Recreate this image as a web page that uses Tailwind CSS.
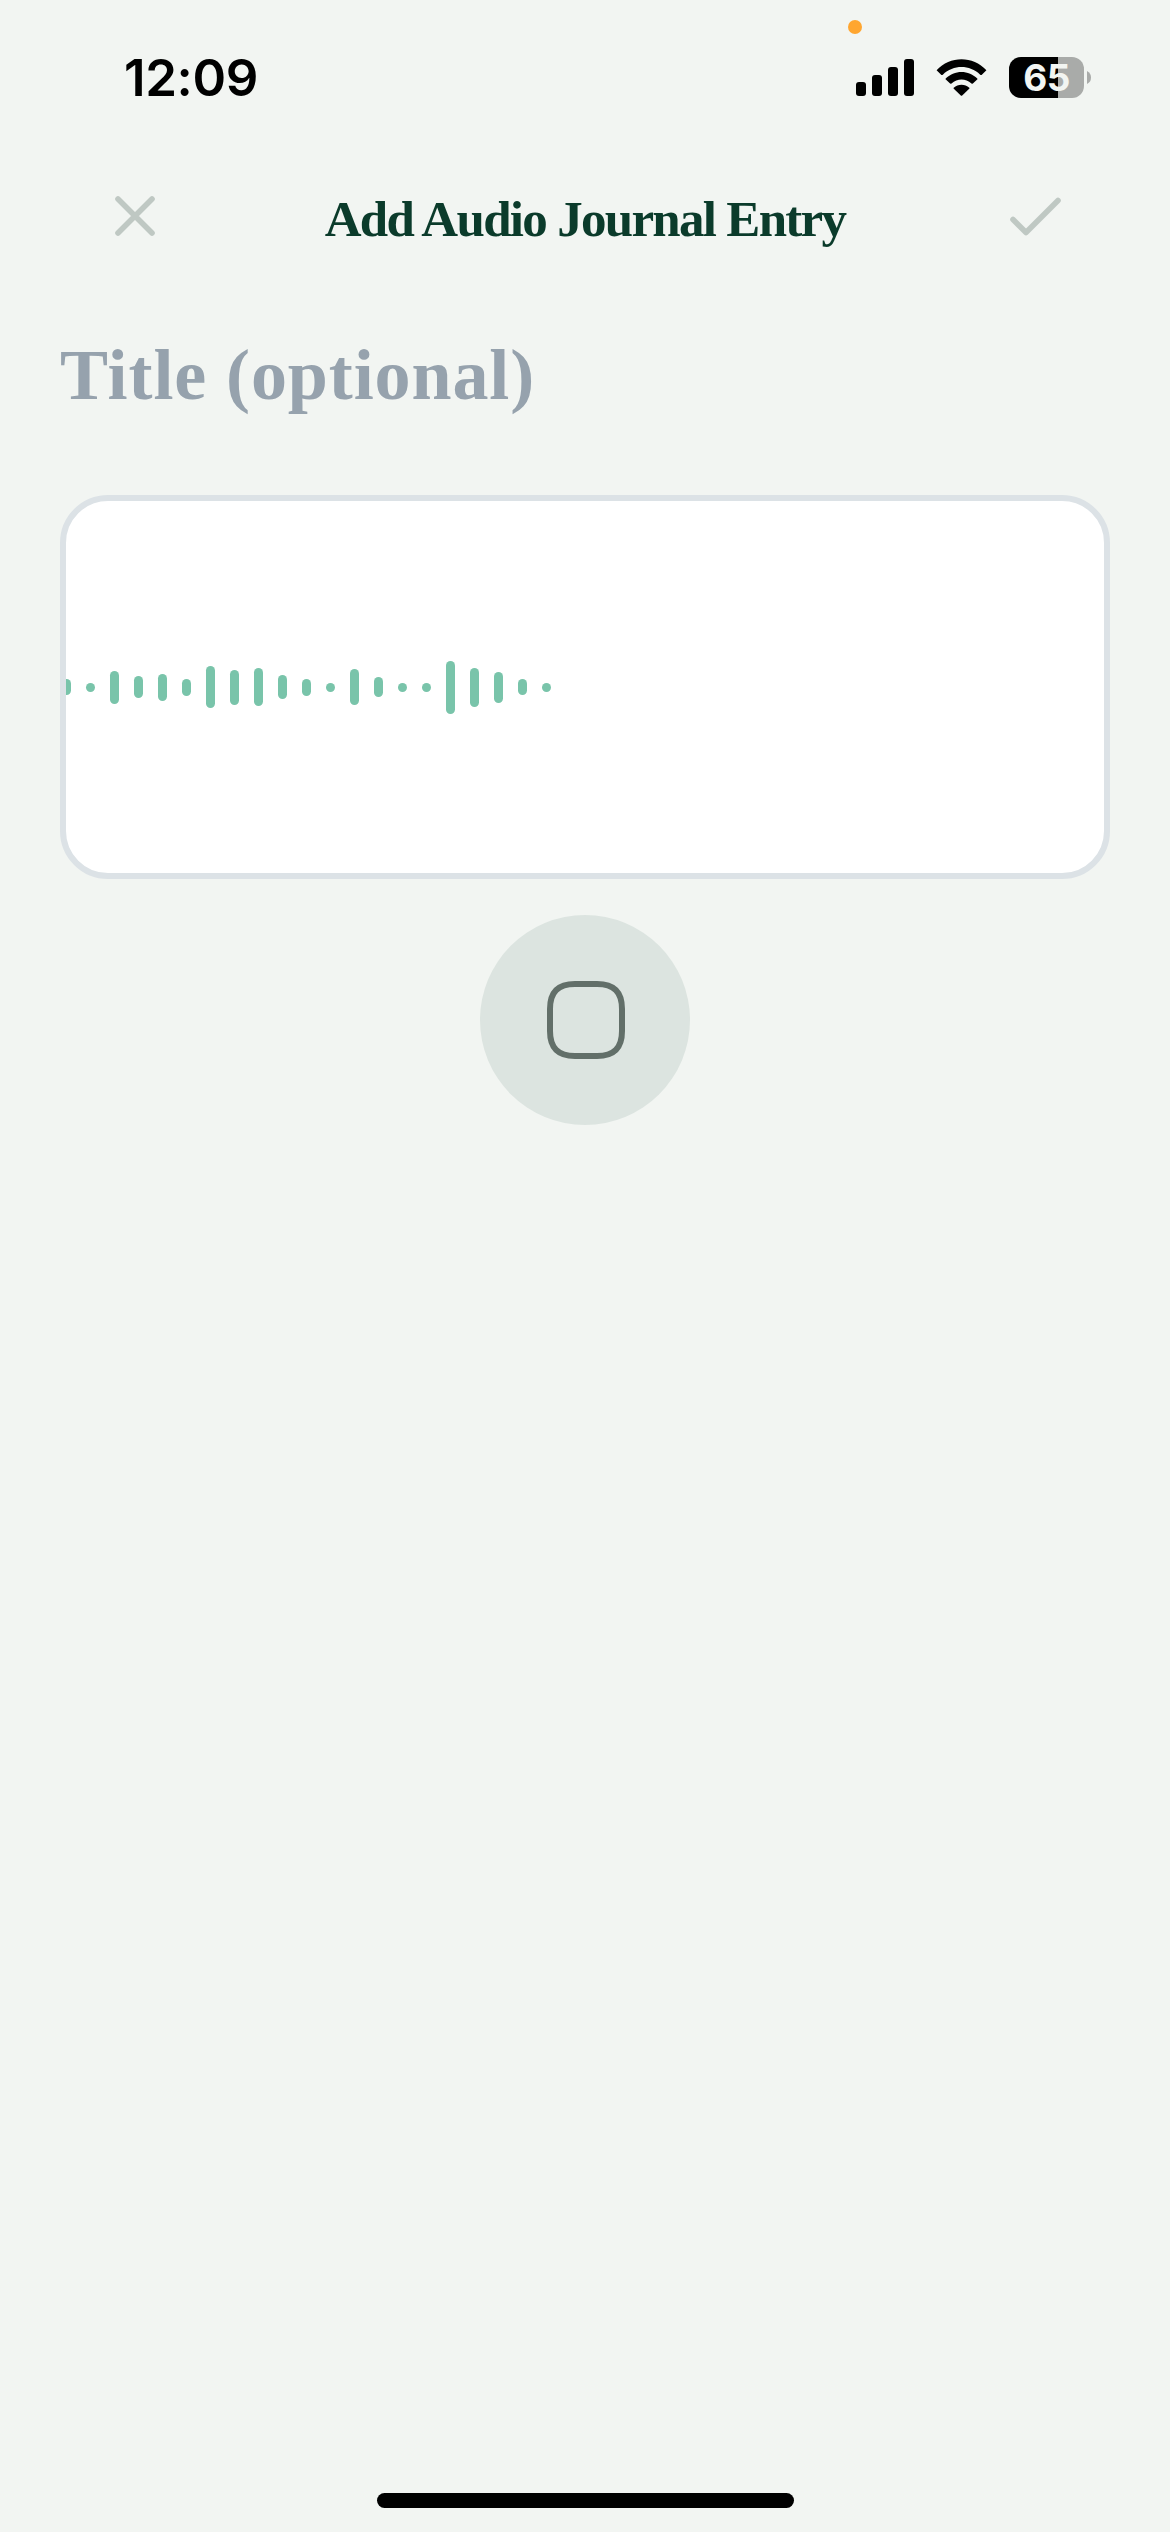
<!DOCTYPE html>
<html lang="en">
<head>
<meta charset="utf-8">
<title>Add Audio Journal Entry</title>
<script src="https://cdn.jsdelivr.net/npm/@tailwindcss/browser@4"></script>
</head>
<body class="bg-[#f2f5f2]">
<div class="relative flex h-[2532px] w-[1170px] flex-col overflow-hidden bg-[#f2f5f2]">
  <!-- Status bar -->
  <header class="flex h-[156px] items-start justify-between pr-[79px] pl-[124px]">
    <div class="mt-[48px] font-['Inter',sans-serif] text-[51px] leading-[60px] font-semibold tracking-[-0.4px] text-black">12:09</div>
    <div class="mt-[57px] flex items-start">
      <svg class="mt-[2px] h-[37px] w-[58px]" viewBox="0 0 58 37"><rect y="23" width="10" height="14" rx="3"/><rect x="16" y="16" width="10" height="21" rx="3"/><rect x="32" y="8" width="10" height="29" rx="3"/><rect x="48" width="10" height="37" rx="3"/></svg>
      <svg class="mt-[2px] ml-[22px] h-[37px] w-[51px]" viewBox="0 0 51 37"><path d="M.6 11.2C14-3.5 37-3.5 50.400 11.200L45.600 16Q44.900 16.300 44.200 15.700C33.500 5.500 17.500 5.500 6.800 15.700Q6.100 16.300 5.400 16Z"/><path d="M9.300 19.900C18.500 10.700 32.500 10.700 41.700 19.900L36.900 24.600Q36.200 25 35.500 24.400C29.500 19.200 21.500 19.200 15.500 24.400Q14.800 25 14.100 24.600Z"/><path d="M17.700 28.700C22 24.800 29 24.800 33.300 28.700Q33.700 29.300 33.200 29.800L26.200 36.600Q25.500 37 24.800 36.600L17.800 29.800Q17.300 29.300 17.700 28.700Z"/></svg>
      <div class="ml-[22px] flex h-[41px] w-[75px] items-center justify-center rounded-[12px] bg-[linear-gradient(to_right,black_49px,#a9aba9_49px)]">
        <span class="font-['Inter',sans-serif] text-[37px] leading-[41px] font-bold tracking-[-0.5px] text-[#f2f5f2]">65</span>
      </div>
      <svg class="mt-[14px] ml-[3px] h-[13px] w-[4px]" viewBox="0 0 4 13"><path d="M0 0Q4 2 4 6.500T0 13Z" fill="#a9aba9"/></svg>
    </div>
  </header>
  <i class="absolute top-[20px] left-[848px] size-[14px] rounded-full bg-[#ffa630]"></i>

  <!-- Navigation bar -->
  <nav class="flex h-[120px] items-center justify-between pr-[109px] pl-[115px]">
    <svg class="size-[40px]" viewBox="0 0 40 40" fill="none" stroke="#bfc8c3" stroke-width="5.600" stroke-linecap="round"><path d="M3 3L37 37M37 3L3 37"/></svg>
    <h1 class="mt-[5px] ml-[5px] font-['Liberation_Serif',serif] text-[51px] leading-[60px] font-bold tracking-[-1.7px] whitespace-nowrap text-[#0b3b2b]">Add Audio Journal Entry</h1>
    <svg class="h-[40px] w-[51px]" viewBox="0 0 51 40" fill="none" stroke="#bfc8c3" stroke-width="5.600" stroke-linecap="round" stroke-linejoin="round"><path d="M3 23.500L16 36.500L48 4.500"/></svg>
  </nav>

  <!-- Entry form -->
  <main class="flex flex-col items-center px-[60px]">
    <div class="mt-[57px] h-[84px] w-full font-['Liberation_Serif',serif] text-[72px] leading-[84px] font-bold tracking-[0.9px] whitespace-nowrap text-[#96a2ad]">Title (optional)</div>
    <div class="mt-[78px] flex h-[384px] w-full items-center gap-[15px] overflow-hidden rounded-[48px] border-[6px] border-[#dce2e6] bg-white *:w-[9px] *:shrink-0 *:rounded-full *:bg-[#79c4aa]">
      <i class="-ml-[4.5px] h-[16px]"></i><i class="h-[9px]"></i><i class="h-[33px]"></i><i class="h-[22px]"></i><i class="h-[27px]"></i><i class="h-[17px]"></i><i class="h-[42px]"></i><i class="h-[35px]"></i><i class="h-[38px]"></i><i class="h-[24px]"></i><i class="h-[17px]"></i><i class="h-[9px]"></i><i class="h-[36px]"></i><i class="h-[20px]"></i><i class="h-[9px]"></i><i class="h-[9px]"></i><i class="h-[53px]"></i><i class="h-[39px]"></i><i class="h-[31px]"></i><i class="h-[16px]"></i><i class="h-[9px]"></i>
    </div>
    <button class="mt-[36px] flex size-[210px] items-center justify-center rounded-full bg-[#dce4e0]" aria-label="Stop recording">
      <svg class="ml-[2px] size-[78px]" viewBox="0 0 78 78" fill="none" stroke="#626f69" stroke-width="6"><path d="M28 3H50C67 3 75 11 75 28V50C75 67 67 75 50 75H28C11 75 3 67 3 50V28C3 11 11 3 28 3Z"/></svg>
    </button>
  </main>
  <div class="mt-auto mb-[24px] ml-[377px] h-[15px] w-[417px] rounded-full bg-black"></div>
</div>
</body>
</html>
